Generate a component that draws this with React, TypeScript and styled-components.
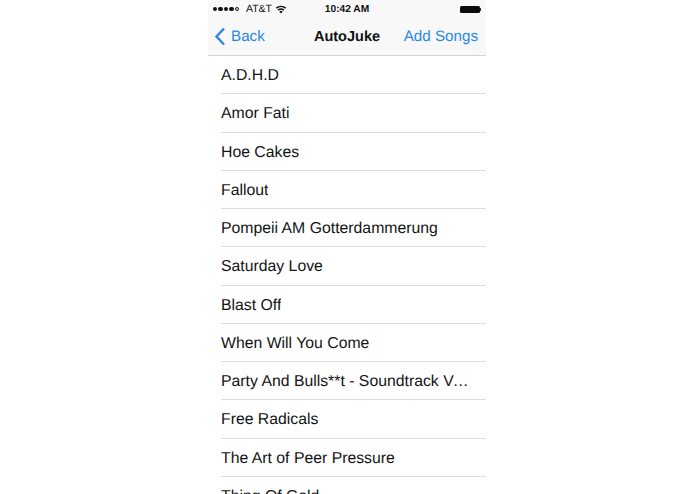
import React from "react";
import styled, { createGlobalStyle } from "styled-components";

const GlobalStyle = createGlobalStyle`
  html, body {
    margin: 0;
    padding: 0;
    height: 100%;
    background: #fff;
    overflow: hidden;
  }
`;

const Page = styled.div`
  display: flex;
  justify-content: center;
  height: 494px;
  overflow: hidden;
  font-family: "Liberation Sans", Arial, sans-serif;
  text-rendering: geometricPrecision;
`;

const Phone = styled.div`
  display: flex;
  flex-direction: column;
  width: 278px;
  height: 494px;
  margin-right: 1px;
  overflow: hidden;
  background: #fff;
`;

const Header = styled.header`
  flex: none;
  height: 55px;
  background: #f8f8f8;
  border-bottom: 1px solid #d2d2d2;
`;

const StatusBar = styled.div`
  display: grid;
  grid-template-columns: 1fr auto 1fr;
  align-items: center;
  height: 18px;
  padding: 0 5px;
  font-size: 10.5px;
  color: #111;
`;

const Carrier = styled.div`
  display: flex;
  align-items: center;
  gap: 3px;
`;

const Signal = styled.div`
  display: flex;
  gap: 1px;
  margin-right: 4px;
`;

const Dot = styled.span<{ $empty?: boolean }>`
  width: 4.4px;
  height: 4.4px;
  box-sizing: border-box;
  border-radius: 50%;
  background: ${(p) => (p.$empty ? "transparent" : "#111")};
  border: ${(p) => (p.$empty ? "0.7px solid #111" : "none")};
`;

const Clock = styled.div`
  font-size: 10.2px;
  font-weight: 700;
`;

const BatteryWrap = styled.div`
  display: flex;
  justify-content: flex-end;
  align-items: center;
`;

const BatteryBody = styled.span`
  width: 20px;
  height: 7px;
  border-radius: 1.5px;
  background: #0a0a0a;
`;

const BatteryTip = styled.span`
  width: 1px;
  height: 3px;
  background: #333;
`;

const NavBar = styled.nav`
  display: grid;
  grid-template-columns: 1fr auto 1fr;
  align-items: center;
  height: 35px;
  padding: 1px 8px 0 6px;
`;

const BackLink = styled.a`
  display: flex;
  align-items: center;
  gap: 5px;
  color: #2a87e8;
  font-size: 15.2px;
`;

const NavTitle = styled.div`
  margin: 1px 0 0 2px;
  font-size: 14.5px;
  font-weight: 700;
  color: #111;
`;

const AddLink = styled.a`
  justify-self: end;
  color: #2a87e8;
  font-size: 15.2px;
`;

const SongList = styled.ul`
  list-style: none;
  margin: 0;
  padding: 0 0 0 13px;
`;

const SongRow = styled.li`
  display: flex;
  align-items: center;
  box-sizing: border-box;
  height: 38.25px;
  padding-top: 3px;
  padding-right: 17px;
  border-bottom: 1px solid #dedede;
  font-size: 15.8px;
  color: #141414;
`;

const SongName = styled.span`
  white-space: nowrap;
  overflow: hidden;
  text-overflow: ellipsis;
`;

const songs = [
  "A.D.H.D",
  "Amor Fati",
  "Hoe Cakes",
  "Fallout",
  "Pompeii AM Gotterdammerung",
  "Saturday Love",
  "Blast Off",
  "When Will You Come",
  "Party And Bulls**t - Soundtrack Version",
  "Free Radicals",
  "The Art of Peer Pressure",
  "Thing Of Gold",
];

export default function App() {
  return (
    <Page>
      <GlobalStyle />
      <Phone>
        <Header>
          <StatusBar>
            <Carrier>
              <Signal>
                <Dot />
                <Dot />
                <Dot />
                <Dot />
                <Dot $empty />
              </Signal>
              <span>AT&amp;T</span>
              <svg width="12" height="10" viewBox="0 0 12 10" fill="#111">
                <path d="M6 9.6 4.3 7.6a2.6 2.6 0 0 1 3.4 0z" />
                <path d="M3.5 6.7 2.6 5.6a5.2 5.2 0 0 1 6.8 0L8.5 6.7a3.9 3.9 0 0 0-5 0z" />
                <path d="M1.8 4.7.8 3.6a8 8 0 0 1 10.4 0l-1 1.1a6.5 6.5 0 0 0-8.4 0z" />
              </svg>
            </Carrier>
            <Clock>10:42 AM</Clock>
            <BatteryWrap>
              <BatteryBody />
              <BatteryTip />
            </BatteryWrap>
          </StatusBar>
          <NavBar>
            <BackLink>
              <svg width="12" height="19" viewBox="0 0 12 19" fill="none">
                <path d="M10 1.5 2.5 9.5l7.5 8" stroke="#2a87e8" strokeWidth="2.4" />
              </svg>
              Back
            </BackLink>
            <NavTitle>AutoJuke</NavTitle>
            <AddLink>Add Songs</AddLink>
          </NavBar>
        </Header>
        <SongList>
          {songs.map((name) => (
            <SongRow key={name}>
              <SongName>{name}</SongName>
            </SongRow>
          ))}
        </SongList>
      </Phone>
    </Page>
  );
}
